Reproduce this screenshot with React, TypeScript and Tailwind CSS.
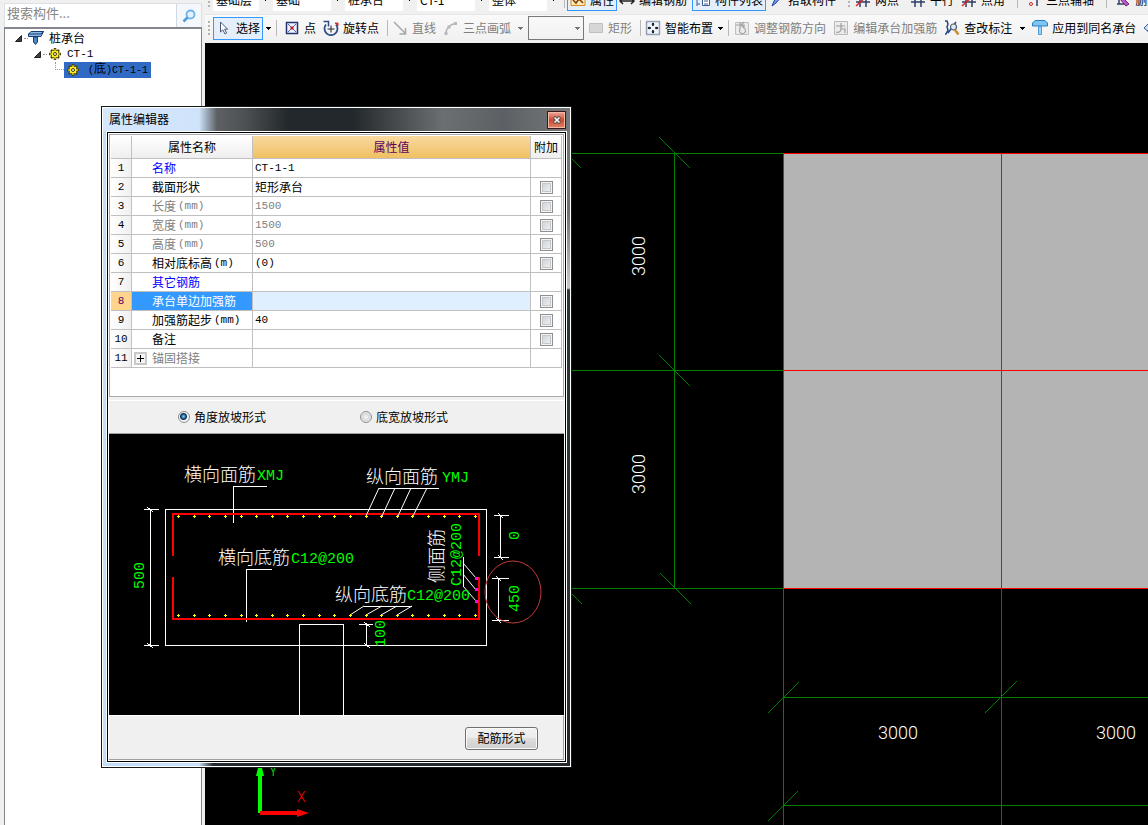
import React from 'react';
import { clsx } from 'clsx';

const properties = [
  { name: '名称', value: 'CT-1-1', tone: 'blue' },
  { name: '截面形状', text: '矩形承台', check: true },
  { name: '长度', unit: '(mm)', value: '1500', tone: 'gray', check: true },
  { name: '宽度', unit: '(mm)', value: '1500', tone: 'gray', check: true },
  { name: '高度', unit: '(mm)', value: '500', tone: 'gray', check: true },
  { name: '相对底标高', unit: '(m)', value: '(0)', check: true },
  { name: '其它钢筋', tone: 'blue' },
  { name: '承台单边加强筋', selected: true, check: true },
  { name: '加强筋起步', unit: '(mm)', value: '40', check: true },
  { name: '备注', check: true },
  { name: '锚固搭接', tone: 'gray', group: true },
];

// 20 bars, evenly spread along the top and bottom reinforcement
const barXs = Array.from({ length: 20 }, (_, i) => Math.round(178 + (i * 297) / 19));

/* ---------- toolbar pieces ---------- */

function Icon({ children }: { children?: React.ReactNode }) {
  return (
    <svg viewBox="0 0 16 16" className="w-4 h-4 shrink-0" fill="none" aria-hidden="true">
      {children}
    </svg>
  );
}

function Grip() {
  return (
    <span className="w-2 shrink-0 flex flex-col items-center gap-[2px]">
      {[0, 1, 2, 3].map((i) => (
        <span key={i} className="w-[2px] h-[2px] bg-[#b4b4b4]" />
      ))}
    </span>
  );
}

function Sep({ wide }: { wide?: boolean }) {
  return (
    <span className={clsx('shrink-0 flex justify-center', wide ? 'w-3.5' : 'w-1.5')}>
      <span className="w-px h-4 bg-[#b8b8b8]" />
    </span>
  );
}

function Caret({ muted, className }: { muted?: boolean; className: string }) {
  return (
    <span className={clsx('shrink-0 flex justify-center', className)}>
      <svg viewBox="0 0 5 3" className="w-[5px] h-[3px]" shapeRendering="crispEdges" aria-hidden="true">
        <path d="M0 0h5L2.5 3z" fill={muted ? '#777' : '#000'} />
      </svg>
    </span>
  );
}

type ToolProps = {
  icon: React.ReactNode;
  label: string;
  muted?: boolean;
  active?: boolean;
  tight?: boolean;
};

function Tool({ icon, label, muted, active, tight }: ToolProps) {
  return (
    <button
      type="button"
      disabled={muted}
      className={clsx(
        'h-[23px] shrink-0 flex items-center gap-1 whitespace-nowrap',
        active ? 'border border-[#3399ff] bg-[#e4effb] px-0.5' : 'px-0.5',
        !active && !tight && 'mr-[3px]',
        muted ? 'text-[#808080]' : 'text-black'
      )}
    >
      <Icon>{icon}</Icon>
      {label}
    </button>
  );
}

function Combo({ value, label, className }: { value: string; label: string; className: string }) {
  return (
    <span className={clsx('h-[22px] shrink-0 flex items-center bg-white mr-0.5', className)}>
      <select aria-label={label} className="appearance-none flex-1 min-w-0 h-full pl-[3px] bg-white outline-none">
        <option>{value}</option>
      </select>
      <span className="h-full w-3 bg-[#f0f0f0] flex items-center justify-center">
        <Caret className="w-2" />
      </span>
    </span>
  );
}

const gridIcon = <path d="M1 5h14M1 10h14M5 1v14M11 1v14" stroke="#2c3e66" strokeWidth="1.5" />;
const gridCutIcon = (
  <>
    <path d="M1 5h14M1 10h14M5 1v14M11 1v14" stroke="#2c3e66" strokeWidth="1.5" />
    <path d="M1 14L14 2" stroke="#d22" strokeWidth="1.5" />
  </>
);

const rebarEditIcon = (
  <>
    <path d="M1.5 1.5h13v13h-13z" fill="#ececec" stroke="#b9b9b9" />
    <path d="M3 6h9M8 3v6c0 3-3 4-5 3M8 9h4v4" stroke="#9d9d9d" strokeWidth="1.2" />
  </>
);

function Toolbars() {
  return (
    <header className="h-[43px] shrink-0 flex flex-col justify-end overflow-hidden bg-[#f0f0f0]">
      <div className="h-7 shrink-0 pb-0.5 flex items-center overflow-hidden border-b border-[#e6e6e6]">
        <Grip />
        <Combo label="楼层" value="基础层" className="w-[58px]" />
        <Combo label="类别" value="基础" className="w-[70px]" />
        <Combo label="构件类型" value="桩承台" className="w-[70px]" />
        <Combo label="构件" value="CT-1" className="w-[70px]" />
        <Combo label="范围" value="整体" className="w-[70px]" />
        <Sep />
        <Tool active label="属性" icon={
          <>
            <path d="M1 2.500h14v11H1z" fill="#ffe9b0" stroke="#e08a28" />
            <path d="M3 8l3 3 3-4 4 4" stroke="#7a3c10" strokeWidth="1.500" />
          </>
        } />
        <Tool label="编辑钢筋" icon={<path d="M1 9h14M4 6L1 9l3 3M12 6l3 3-3 3M5 5v3M11 5v3" stroke="#222" strokeWidth="1.500" />} />
        <Tool active label="构件列表" icon={
          <>
            <path d="M7.500 2.500h7v11h-7z" fill="#fff" stroke="#3c5a94" />
            <path d="M9 6h4M9 9h4M9 12h4M2 2v12M2 7h3M2 12h3" stroke="#3c5a94" />
          </>
        } />
        <Tool label="拾取构件" icon={<path d="M4 14l2-5 6-7 2 2-6 7-4 3z" fill="#6f9be6" stroke="#2447a8" />} />
        <span className="w-1 shrink-0" />
        <Grip />
        <Tool label="两点" icon={gridCutIcon} />
        <span className="w-1 shrink-0" />
        <Tool label="平行" icon={gridIcon} />
        <Tool label="点角" icon={gridCutIcon} />
        <Sep wide />
        <Tool label="三点辅轴" icon={
          <>
            <path d="M11 2v12" stroke="#2c3e66" strokeWidth="1.500" />
            <path d="M5 2v6" stroke="#c22" strokeWidth="1.500" />
            <circle cx="5" cy="12" r="1.500" stroke="#c22" />
          </>
        } />
        <Sep wide />
        <Tool label="删除辅轴" icon={
          <>
            <path d="M2 12h9M4 2v10" stroke="#2c3e66" strokeWidth="1.500" />
            <path d="M6 4l8 8-3 2-7-8z" fill="#b25ad0" stroke="#7a2260" />
          </>
        } />
      </div>
      <div className="h-7 shrink-0 pb-0.5 flex items-center overflow-hidden bg-linear-to-b from-[#fafafa] to-[#f0f0f0]">
        <Grip />
        <Tool active label="选择" icon={<path d="M4.500 2v10l2.300-2.200L9 14l1.600-1-2-3.800h3z" fill="#fff" stroke="#4a5878" />} />
        <Caret className="w-2.5" />
        <Sep />
        <span className="w-[3px] shrink-0" />
        <Tool label="点" icon={
          <>
            <path d="M2.500 2.500h11v11h-11z" fill="#eef2ff" stroke="#26346e" strokeWidth="1.500" />
            <path d="M4 4l8 8M12 4l-8 8" stroke="#4460b8" />
            <path d="M6.500 6.500h3v3h-3z" fill="#c81e1e" />
          </>
        } />
        <Tool label="旋转点" icon={
          <>
            <path d="M13 4.500a6.500 6.500 0 1 1-10 0" stroke="#2f4d8a" strokeWidth="1.800" />
            <path d="M.5 1.500h5v5" stroke="#2f4d8a" strokeWidth="1.500" />
            <path d="M8 5.500v7M4.500 9h7" stroke="#223" />
            <path d="M12 3h3v3z" fill="#c33" stroke="#c33" />
          </>
        } />
        <Sep />
        <Tool muted label="直线" icon={<path d="M2 2l11 11M13.500 8v6h-6" stroke="#a8a8a8" strokeWidth="1.500" />} />
        <Tool muted tight label="三点画弧" icon={
          <>
            <path d="M3 14C3 8 7 4 13 3.500" stroke="#b0b0b0" strokeWidth="1.500" />
            <path d="M1.500 12h3v3h-3zM4.500 5.500h3v3h-3zM11 2h3v3h-3z" fill="#b8b8b8" />
          </>
        } />
        <Caret muted className="w-3.5" />
        <span className="w-14 h-6 shrink-0 ml-px mr-0.5 flex items-center border border-[#7a7a7a]">
          <select aria-label="画法" className="appearance-none flex-1 min-w-0 h-full bg-transparent" disabled />
          <Caret muted className="w-3" />
        </span>
        <Tool muted label="矩形" icon={<path d="M1.500 3.500h13v9h-13z" fill="#d6d6d6" stroke="#c0c0c0" />} />
        <Sep />
        <Tool tight label="智能布置" icon={
          <>
            <path d="M1.500 1.500h13v13h-13z" fill="#eef3fb" stroke="#3c5478" strokeWidth="1.500" strokeDasharray="1 1" />
            <path d="M8 3v3M8 10v3M3 8h3M10 8h3" stroke="#111" strokeWidth="1.500" />
            <path d="M6.500 4.500h3L8 2.500zM6.500 11.500h3L8 13.500zM4.500 6.500v3L2.500 8zM11.500 6.500v3l2-1.500z" fill="#111" />
          </>
        } />
        <Caret className="w-2.5" />
        <Sep />
        <span className="w-px shrink-0" />
        <Tool muted label="调整钢筋方向" icon={
          <>
            <path d="M1.500 2.500h13v12h-13z" fill="#ececec" stroke="#c0c0c0" />
            <path d="M2 5h8v3a3 3 0 1 1-4 1V2M10 2L7 5l3 3" stroke="#a4a4a4" strokeWidth="1.200" />
          </>
        } />
        <Tool muted label="编辑承台加强筋" icon={rebarEditIcon} />
        <Tool tight label="查改标注" icon={
          <>
            <path d="M1 1h2l1 3-1 3 1 3-2 4H1M4 13l8-11" stroke="#24458c" strokeWidth="1.500" />
            <circle cx="9.500" cy="7" r="3" fill="#dbeaf6" stroke="#54646e" strokeWidth="1.200" />
            <path d="M11 10l3.500 4.500" stroke="#c98b2c" strokeWidth="2.500" />
          </>
        } />
        <Caret className="w-4" />
        <Tool label="应用到同名承台" icon={
          <>
            <path d="M3 .5h10l2.500 2.500v3H.5V3z" fill="#7cc4f2" stroke="#2c7cc0" />
            <path d="M6.500 6.500h3v8h-3z" fill="#9ad4f6" stroke="#4a9cd8" />
          </>
        } />
        <Tool label="复制" icon={<path d="M1 8l5-5 8 7-5 5zM4 10l5 5" fill="#cfe0f4" stroke="#3a5c90" />} />
      </div>
    </header>
  );
}

/* ---------- component tree ---------- */

function Expander() {
  return (
    <svg viewBox="0 0 7 7" className="w-[7px] h-[7px] shrink-0" aria-hidden="true">
      <path d="M6.500 .5v6h-6z" fill="#404040" stroke="#202020" />
    </svg>
  );
}

function Gear() {
  return (
    <svg viewBox="0 0 12 12" className="w-3 h-3 shrink-0" aria-hidden="true">
      <path
        d="M6 0v12M0 6h12M2 2l8 8M10 2l-8 8"
        stroke="#4a4400"
        strokeWidth="2.500"
      />
      <circle cx="6" cy="6" r="4" fill="#ffee20" stroke="#6a6000" />
      <path d="M6 1v10M1 6h10M3 3l6 6M9 3L3 9" stroke="#ffee20" />
      <circle cx="6" cy="6" r="1.500" fill="#fff" stroke="#3a3600" />
    </svg>
  );
}

function Sidebar() {
  return (
    <aside className="w-[205px] shrink-0 flex flex-col bg-[#f0f0f0] pl-1 pr-[3px] pt-[3px]">
      <div className="h-6 shrink-0 flex border border-b-0 border-[#dcdfe6]">
        <input
          type="text"
          aria-label="搜索构件"
          placeholder="搜索构件..."
          className="flex-1 min-w-0 pl-0.5 pb-1.5 bg-white border-r border-[#d0d8e4] text-[13px] placeholder:text-[#858585] outline-none"
        />
        <button type="button" aria-label="搜索" className="w-6 shrink-0 flex items-center justify-center bg-[#f4f7fb]">
          <svg viewBox="0 0 14 14" className="w-3.5 h-3.5" fill="none" aria-hidden="true">
            <circle cx="8.500" cy="5.500" r="4" fill="#e4f3ff" stroke="#6ab4ea" strokeWidth="1.800" />
            <path d="M5.500 8.500L1.500 12.500" stroke="#4f9fdc" strokeWidth="2.500" />
          </svg>
        </button>
      </div>
      <ul className="flex-1 bg-white border-t-2 border-x border-[#84868e] pt-px leading-4">
        <li className="h-4 pl-2.5 flex items-center">
          <Expander />
          <span className="w-1 ml-0.5 border-t border-dotted border-[#999]" />
          <svg viewBox="0 0 16 14" className="w-4 h-3.5 mr-[5px]" aria-hidden="true">
            <path d="M3 .5h12.500L13 5.500H.5V3z" fill="#8cb8e4" stroke="#173f73" />
            <path d="M.5 3h12.500l2.500-2.500" fill="none" stroke="#173f73" />
            <path d="M5.500 6h4v5l-2 2.500-2-2.500z" fill="#4c88c8" stroke="#173f73" />
          </svg>
          桩承台
        </li>
        <li className="h-4 pl-[29px] flex items-center">
          <Expander />
          <span className="w-1 mx-0.5 border-t border-dotted border-[#999]" />
          <Gear />
          <span className="ml-1.5 font-['Liberation_Mono',monospace] text-[11px]">CT-1</span>
        </li>
        <li className="h-4 pl-[50px] flex">
          <span className="w-[9px] h-2 border-l border-b border-dotted border-[#999]" />
          <span className="h-4 w-[87px] pl-[3px] flex items-center bg-[#316ac5]">
            <Gear />
            <span className="ml-[9px] font-['Liberation_Mono','Noto_Sans_CJK_SC',monospace] text-[10px] whitespace-nowrap">
              (<span className="text-xs leading-4">底</span>)CT-1-1
            </span>
          </span>
        </li>
      </ul>
    </aside>
  );
}

/* ---------- drawing area ---------- */

function Canvas() {
  return (
    <svg className="flex-1 min-h-0 w-full bg-black" fill="none">
      <g transform="translate(-205 -43)">
        <path d="M783 153h2000v435H783z" fill="#b4b4b4" />
        <g shapeRendering="crispEdges">
          <path d="M205 153.500H783M205 370.500H783M205 588.500H783M674.500 153V588" stroke="#008000" />
          <path d="M783.500 588V2000M1001.500 588V2000M783 697.500H2783M783 805.500H2783" stroke="#008000" />
          <path d="M783.500 588V153.500M783 153.500H2783M783 370.500H2783M1001.500 153V588" stroke="#f00" />
          <path d="M783 588.500H2783" stroke="#f00" />
          <path d="M659 137l31 31M659 355l31 31M660 573l31 31M566 153l15 15M567 589l15 15" stroke="#008000" />
          <path d="M768 713l31-31M985 713l32-32M768 821l30-30" stroke="#008000" />
        </g>
        <g fill="#fff" className="font-['Roboto',sans-serif] font-light text-[18px]">
          <text x="878" y="739">3000</text>
          <text x="1096" y="739">3000</text>
          <text transform="translate(645 276) rotate(-90)">3000</text>
          <text transform="translate(645 494) rotate(-90)">3000</text>
        </g>
        {/* axis marker */}
        <path d="M260 813V772" stroke="#0f0" strokeWidth="4" />
        <path d="M256 776l2-8h4l2 8z" fill="#0f0" />
        <path d="M260 813h38" stroke="#f00" strokeWidth="4" />
        <path d="M297 809l12 4-12 4z" fill="#f00" />
        <g className="font-['Roboto',sans-serif] font-light text-[14px]">
          <text x="269" y="776" fill="#0f0">Y</text>
          <text x="297" y="802" fill="#f00">X</text>
        </g>
      </g>
    </svg>
  );
}

/* ---------- pile cap section ---------- */

function SectionDiagram() {
  return (
    <svg className="block w-full h-[281px] bg-black" fill="none">
      <g transform="translate(-109 -434)">
        <g stroke="#fff" shapeRendering="crispEdges">
          <path d="M165.500 509.500h321v136h-321z" />
          <path d="M299.500 716V624.500h44V716" />
          <path d="M267 486.500H233.500V523M272 569.500H246.500V622" />
          <path d="M379 488.500h60M364 606.500h48M463.500 557v29" />
          <path d="M150.500 509v137M144 509.500h15M144 645.500h15M147 507l6 5M147 643l6 5" />
          <path d="M500.500 515v43M494 515.500h15M494 557.500h15M498 513l5 5M498 555l5 5" />
          <path d="M498.500 578v43M492 578.500h17M492 620.500h17M496 576l5 5M496 618l5 5" />
          <path d="M366.500 624v22M359 624.500h14M364 622l6 5M364 643l6 5" />
        </g>
        <g stroke="#f00" strokeWidth="2" shapeRendering="crispEdges">
          <path d="M173 556V514h306v42M173 577v42h306v-42" />
        </g>
        <path
          d="M379 488l-13 28M395 488l-13 28M411 488l-13 28M427 488l-14 28M364 606l-14 9M382 606l-16 9M397 606l-16 9M412 606l-15 9M463 563l13 15M463 574l13 16M463 586l13 15"
          stroke="#fff"
        />
        {barXs.map((x) => (
          <path
            key={x}
            d={`M${x - 1} 516.500h3M${x + 0.5} 515v3M${x - 1} 615.500h3M${x + 0.5} 614v3`}
            stroke="#ff0"
            shapeRendering="crispEdges"
          />
        ))}
        <path d="M475 577h3v3h-3zM475 588h3v3h-3zM475 600h3v3h-3z" fill="#f0f" />
        <ellipse cx="513" cy="592" rx="28" ry="31" stroke="#c43a3a" />

        <g fill="#fff" className="font-['Noto_Sans_CJK_SC',sans-serif] font-light text-[18px]">
          <text x="184" y="481">横向面筋</text>
          <text x="366" y="483">纵向面筋</text>
          <text x="218" y="564">横向底筋</text>
          <text x="335" y="601">纵向底筋</text>
          <text transform="translate(443 583) rotate(-90)">侧面筋</text>
        </g>
        <g fill="#0f0" className="font-['Liberation_Mono',monospace] text-[15px]">
          <text x="257" y="480">XMJ</text>
          <text x="442" y="482">YMJ</text>
          <text x="291" y="563">C12@200</text>
          <text x="407" y="600">C12@200</text>
          <text transform="translate(461 586) rotate(-90)">C12@200</text>
          <text transform="translate(144 589) rotate(-90)">500</text>
          <text transform="translate(519 540) rotate(-90)">0</text>
          <text transform="translate(519 612) rotate(-90)">450</text>
          <text transform="translate(385 647) rotate(-90)">100</text>
        </g>
      </g>
    </svg>
  );
}

/* ---------- property editor ---------- */

const headCell = 'border-r border-b border-[#c0c0c0] bg-linear-to-b from-white to-[#eeeeee] font-normal p-0';
const cell = 'border-r border-b border-[#c0c0c0] p-0';

function PropertyTable() {
  return (
    <div className="h-[263px] border border-[#a8a8b0] bg-white p-px leading-4">
      <table className="table-fixed w-[451px] border-separate border-spacing-0">
        <colgroup>
          <col className="w-[21px]" />
          <col className="w-[121px]" />
          <col className="w-[278px]" />
          <col className="w-[31px]" />
        </colgroup>
        <thead>
          <tr className="h-[23px]">
            <th className={headCell} />
            <th className={headCell}>属性名称</th>
            <th className="border-r border-b border-[#c0c0c0] bg-linear-to-b from-[#f9d99f] to-[#f0c061] font-normal p-0 text-[#5c005c]">
              属性值
            </th>
            <th className={headCell}>附加</th>
          </tr>
        </thead>
        <tbody>
          {properties.map((p, i) => (
            <tr key={p.name} className="h-[19px]">
              <td
                className={clsx(
                  cell,
                  "text-center font-['Liberation_Mono',monospace] text-[11px]",
                  p.selected ? 'bg-[#ffd58d] text-[#5c005c]' : 'bg-linear-to-r from-white to-[#f0f0f0]'
                )}
              >
                {i + 1}
              </td>
              <td
                className={clsx(
                  cell,
                  p.selected && 'bg-[#3399ff] text-white',
                  p.tone === 'blue' && 'text-[#0000ff]',
                  p.tone === 'gray' && 'text-[#808080]'
                )}
              >
                <span className="flex items-center h-[18px] whitespace-nowrap">
                  <span className="w-5 shrink-0 pl-0.5">
                    {p.group && (
                      <button
                        type="button"
                        aria-label="展开"
                        className="w-[13px] h-[13px] flex items-center justify-center border-2 border-[#c8c8c8] bg-[#f4f4f4]"
                      >
                        <svg viewBox="0 0 7 7" className="w-[7px] h-[7px] shrink-0" shapeRendering="crispEdges">
                          <path d="M0 3.500h7M3.500 0v7" stroke="#000" />
                        </svg>
                      </button>
                    )}
                  </span>
                  {p.name}
                  {p.unit && <span className="ml-0.5 font-['Liberation_Mono',monospace] text-[11px]">{p.unit}</span>}
                </span>
              </td>
              <td className={clsx(cell, 'pl-0.5', p.selected && 'bg-[#dfefff]', p.tone === 'gray' && 'text-[#808080]')}>
                {p.value && <span className="block font-['Liberation_Mono',monospace] text-[11px]">{p.value}</span>}
                {p.text}
              </td>
              <td className={cell}>
                {p.check && (
                  <input
                    type="checkbox"
                    aria-label={`附加 ${p.name}`}
                    className="appearance-none block mx-auto w-[13px] h-[13px] border border-[#8e8f8f] bg-linear-to-br from-[#c9cdd3] to-[#f6f6f6] shadow-[inset_0_0_0_1px_#f4f4f4,inset_0_0_0_2px_#c4c8cc]"
                  />
                )}
              </td>
            </tr>
          ))}
        </tbody>
      </table>
    </div>
  );
}

function SlopeOption({ label, checked }: { label: string; checked?: boolean }) {
  return (
    <label className="flex items-center gap-1">
      <input
        type="radio"
        name="slope"
        defaultChecked={checked}
        className="appearance-none w-3 h-3 rounded-full border border-[#8e8f8f] bg-[radial-gradient(circle,#f4f4f4_0,#d4d6da_4px,#f4f4f4_5px)] checked:bg-[radial-gradient(circle_at_45%_45%,#7fd0f4_0,#1c6c9c_2px,#0c2c48_3px,#f4f4f4_4px)]"
      />
      {label}
    </label>
  );
}

function PropertyEditor() {
  return (
    <section
      role="dialog"
      aria-label="属性编辑器"
      className="absolute left-[101px] top-[106px] w-[471px] border border-[#15191c]"
    >
      <div className="border border-white bg-[linear-gradient(90deg,#c1dcfb_0,#c8e0fb_96px,#23292d_110px)]">
        <div className="h-[23px] pl-1.5 pr-1 flex items-center justify-between bg-[linear-gradient(90deg,#d5e7fc_0,#cfe3fb_96px,#5c6063_114px,#4e5254_140px,#23282c_185px,#23282c_250px,#6c6f71_340px,#5c6064_400px,#75787a_467px)]">
          <h1 className="pb-0.5">属性编辑器</h1>
          <button
            type="button"
            aria-label="关闭"
            className="w-[19px] h-[18px] flex items-center justify-center border border-[#3c1814] bg-linear-to-b from-[#f0a898] via-[#c84830] to-[#e08468] shadow-[inset_0_0_0_1px_#f4b8a8]"
          >
            <svg viewBox="0 0 8 8" className="w-2 h-2" aria-hidden="true">
              <path d="M1 1l6 6M7 1L1 7" stroke="#444" strokeWidth="3" />
              <path d="M1.500 1.500l5 5M6.500 1.500l-5 5" stroke="#fff" strokeWidth="1.500" />
            </svg>
          </button>
        </div>
        <div className="flex pl-[3px] pb-[3px]">
          <div className="flex-1 min-w-0 border border-white">
            <div className="border border-black">
              <div className="border border-white bg-[#f0f0f0]">
                <PropertyTable />
                <div className="h-[34px] mt-[3px] pl-[69px] flex items-center gap-[94px] border-t border-t-white border-b border-b-[#a0a0a0]">
                  <SlopeOption label="角度放坡形式" checked />
                  <SlopeOption label="底宽放坡形式" />
                </div>
                <SectionDiagram />
                <div className="h-[45px] pr-[25px] pt-px flex items-center justify-end border-t border-t-white border-b border-r border-b-[#a0a0a0] border-r-[#a0a0a0]">
                  <button
                    type="button"
                    className="w-[73px] h-[23px] rounded-[3px] border border-[#707070] bg-[linear-gradient(#f2f2f2_0,#ebebeb_50%,#dddddd_50%,#cfcfcf_100%)] shadow-[inset_0_0_0_1px_#fafafa]"
                  >
                    配筋形式
                  </button>
                </div>
              </div>
            </div>
          </div>
          <div className="w-[3px] shrink-0 bg-[linear-gradient(#75787a_0,#6c7474_80px,#c8caca_157px,#2e383a_159px,#23292d_100%)]" />
        </div>
      </div>
    </section>
  );
}

export default function App() {
  return (
    <div className="relative h-screen flex overflow-hidden bg-[#f0f0f0] text-black text-xs font-['Noto_Sans_CJK_SC',sans-serif]">
      <Sidebar />
      <main className="flex-1 min-w-0 flex flex-col">
        <Toolbars />
        <Canvas />
      </main>
      <PropertyEditor />
    </div>
  );
}
